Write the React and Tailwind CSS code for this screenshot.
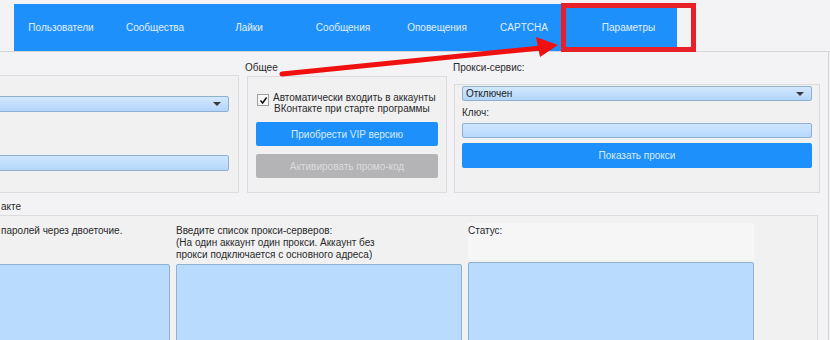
const tabs = [
  { label: 'Пользователи', w: 'w-[94px]' },
  { label: 'Сообщества', w: 'w-[94px]' },
  { label: 'Лайки', w: 'w-[94px]' },
  { label: 'Сообщения', w: 'w-[94px]' },
  { label: 'Оповещения', w: 'w-[94px]' },
  { label: 'CAPTCHA', w: 'w-[80px]' },
];

function Select({ value, className = '' }) {
  return (
    <div className={`flex items-center justify-between rounded-[2px] border border-[#8fb0cf] bg-gradient-to-b from-[#d2e8fe] to-[#b3d5fb] pl-[3px] pr-[7px] ${className}`}>
      <span className="text-[10px] leading-none text-[#1a1a1a]">{value}</span>
      <span className="h-0 w-0 border-x-[4px] border-t-[4px] border-x-transparent border-t-[#3a3a3a]" />
    </div>
  );
}

function Input({ className = '' }) {
  return <div className={`rounded-[2px] border border-[#8fb0cf] bg-gradient-to-b from-[#cfe6fe] to-[#b6d8fc] ${className}`} />;
}

function Area() {
  return <div className="h-[100px] rounded-[2px] border border-[#8fb0cf] bg-[#b9dbfd]" />;
}

export default function App() {
  return (
    <div className="relative h-[340px] w-[830px] overflow-hidden bg-[#f3f3f5] font-['Liberation_Sans',Arial,sans-serif] text-[10px] text-[#2a2a2a]">
      {/* Tabs */}
      <div className="flex h-[52px] items-end border-b border-[#d6d6d8] pl-[14px]">
        <div className="flex h-[47px] bg-[#1e90fb]">
          {tabs.map(t => (
            <div key={t.label} className={`flex items-center justify-center text-[#e0efff] ${t.w}`}>
              {t.label}
            </div>
          ))}
          <div className="flex w-[113px] items-center justify-center pl-[16px] text-[#e0efff]">Параметры</div>
        </div>
      </div>

      <div className="mr-[1px] border-r border-[#d6d6d8]">
        {/* Top groups */}
        <div className="flex items-start">
          <div className="ml-[-20px] mt-[23px] h-[118px] w-[259px] border border-[#dcdcde] bg-[#f1f1f2] pr-[9px] pt-[20px]">
            <Select value="" className="h-[16px]" />
            <Input className="mt-[43px] h-[16px]" />
          </div>

          <div className="ml-[8px] pt-[10px]">
            <div className="h-[12px] leading-[12px] -ml-[2px]">Общее</div>
            <div className="mt-[2px] h-[117px] w-[200px] border border-[#dcdcde] bg-[#f1f1f2] px-[8px] pt-[15px]">
              <div className="flex items-start">
                <div className="ml-[1px] mt-[2px] flex h-[12px] w-[12px] items-center justify-center border border-[#a0a0a0] bg-[#f8f8f8]">
                  <svg width="9" height="9" viewBox="0 0 9 9">
                    <path d="M1.5 4.5 L3.6 7 L7.6 1.5" fill="none" stroke="#111" strokeWidth="1.5" />
                  </svg>
                </div>
                <div className="ml-[4px] leading-[11px]">
                  Автоматически входить в аккаунты<br />
                  <span className="ml-[1px]">ВКонтакте при старте программы</span>
                </div>
              </div>
              <div className="mt-[8px] flex h-[24px] items-center justify-center rounded-[2px] bg-[#1e90fb] text-[#d8ecff]">
                Приобрести VIP версию
              </div>
              <div className="mt-[8px] flex h-[24px] items-center justify-center rounded-[2px] bg-[#b4b4b6] text-[#dcdcdc]">
                Активировать промо-код
              </div>
            </div>
          </div>

          <div className="ml-[7px] pt-[10px]">
            <div className="h-[12px] leading-[12px] -ml-[1px]">Прокси-сервис:</div>
            <div className="mt-[10px] h-[109px] w-[366px] border border-[#dcdcde] bg-[#f1f1f2] px-[7px] pt-[1px]">
              <Select value="Отключен" className="h-[15px]" />
              <div className="mt-[6px] h-[12px] leading-[12px]">Ключ:</div>
              <Input className="mt-[4px] h-[15px]" />
              <div className="mt-[5px] flex h-[25px] items-center justify-center rounded-[2px] bg-[#1e90fb] text-[#d8ecff]">
                Показать прокси
              </div>
            </div>
          </div>
        </div>

        {/* Accounts group */}
        <div className="mt-[8px] h-[12px] pl-[1px] leading-[12px]">акте</div>
        <div className="ml-[-125px] mr-[10px] mt-[2px] border-l border-t border-r border-[#dcdcde] bg-[#f1f1f2] pl-[8px] pt-[9px]">
          <div className="flex gap-[6px]">
            <div className="w-[286px]">
              <div className="h-[39px] whitespace-nowrap pl-[117px] leading-[12px]">
                паролей через двоеточие.
              </div>
              <Area />
            </div>
            <div className="w-[286px]">
              <div className="h-[39px] leading-[12px]">
                Введите список прокси-серверов:<br />
                (На один аккаунт один прокси. Аккаунт без<br />
                прокси подключается с основного адреса)
              </div>
              <Area />
            </div>
            <div className="w-[286px]">
              <div className="-mt-[2px] mb-[2px] h-[37px] bg-[#f6f6f7] pt-[2px] leading-[12px]">Статус:</div>
              <Area />
            </div>
          </div>
        </div>
      </div>

      {/* Annotation */}
      <div className="absolute left-[561px] top-[3px] h-[49px] w-[135px] border-[5px] border-[#e8202a]" />
      <svg className="absolute left-0 top-0" width="830" height="340">
        <line x1="282" y1="74" x2="541" y2="48" stroke="#f01010" strokeWidth="5" strokeLinecap="round" />
        <polygon points="536,37 558,45 540,57" fill="#f01010" />
      </svg>
    </div>
  );
}
